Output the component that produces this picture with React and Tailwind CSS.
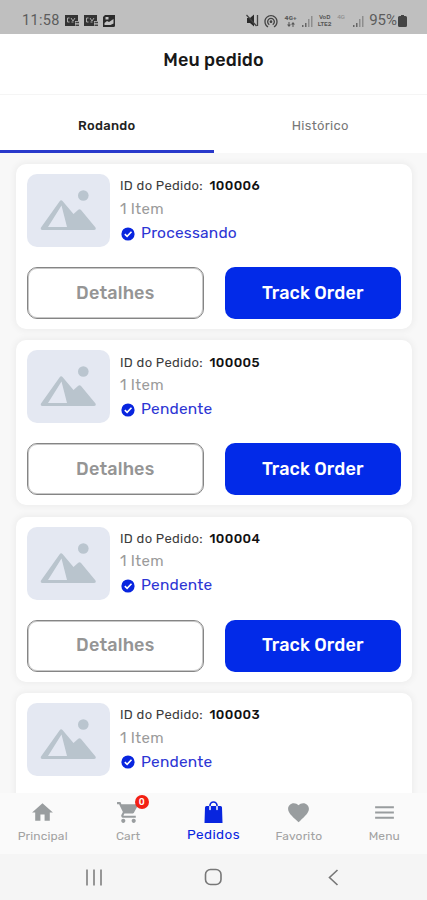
import React from 'react';
import { MdHome, MdShoppingCart, MdFavorite, MdMenu, MdWifiTethering } from 'react-icons/md';

const orders = [
  { id: '100006', status: 'Processando' },
  { id: '100005', status: 'Pendente' },
  { id: '100004', status: 'Pendente' },
  { id: '100003', status: 'Pendente' },
];

function ChatIcon() {
  return (
    <svg width="16" height="13" viewBox="0 0 16 13">
      <path d="M1 1h13v6h-3v5H1z" fill="#333" />
      <path d="M5.500 4H3.500v4h2M7 4l2 3 2-3M7.500 8h2" fill="none" stroke="#aaa" strokeWidth="1" />
      <path d="M11.500 8.500h3.500M11.500 11.300h3.500" stroke="#444" strokeWidth="1.500" />
    </svg>
  );
}

function GalleryIcon() {
  return (
    <svg width="12" height="12" viewBox="0 0 12 12">
      <path d="M2 0h10v10.500q0 1.500-1.500 1.500H0V2z" fill="#2b2b2b" />
      <path d="M2.500 2h3v2.500h-3zM1.500 8l2.500-2 2 1L10.500 4v4.500l-3 1.500h-6z" fill="#c4c4c4" />
    </svg>
  );
}

function MuteIcon() {
  return (
    <svg className="mr-[4px]" width="13" height="13" viewBox="0 0 13 13">
      <path d="M1 4h3l4-3.500v12L4 9H1z" fill="#2b2b2b" />
      <path d="M.5 1l10 11M11.500 1v11" stroke="#444" strokeWidth="1.300" />
    </svg>
  );
}

function Signal() {
  return (
    <svg width="12" height="12" viewBox="0 0 12 12">
      <path d="M1 10h1.500v2H1zM4 8h1.500v4H4z" fill="#666" />
      <path d="M7 4h1.500v8H7zM10 1h1.500v11H10z" fill="#8d8d8d" />
    </svg>
  );
}

function BagIcon({ className }) {
  return (
    <svg className={className} viewBox="0 0 25 25">
      <path d="M5.500 6h14q1.500 0 1.500 1.500L21.500 23H3.500L4 7.500Q4 6 5.500 6z" fill="currentColor" />
      <path d="M9 7V5.500a3.500 3.500 0 0 1 7 0V7" fill="none" stroke="currentColor" strokeWidth="1.700" />
      <path d="M9 6.500v3M16 6.500v3" stroke="#fff" strokeWidth="1.500" strokeLinecap="round" />
    </svg>
  );
}

function StatusBar() {
  return (
    <header className="flex h-[34px] shrink-0 items-center bg-[#bfbfbf] pt-[7px] pr-[20px] pl-[22px] text-[#5c5c5c]">
      <span className="w-[42px] font-[Roboto] text-[14.500px] tracking-[0.300px]">11:58</span>
      <span className="flex items-center gap-[3px]">
        <ChatIcon />
        <ChatIcon />
        <span className="pl-px"><GalleryIcon /></span>
      </span>
      <div className="ml-auto flex items-center">
        <MuteIcon />
        <MdWifiTethering className="mr-[5px] size-[16px] text-[#444]" />
        <span className="mr-[4px] flex w-[13px] flex-col items-center text-[6px] leading-[7px] font-bold">
          <span>4G+</span>
          <svg width="8" height="5" viewBox="0 0 8 5" fill="#555"><path d="M1.500 0h1v2.500H4L2 5 0 2.500h1.500zM5.500 5h1V2.500H8L6 0 4 2.500h1.500z" /></svg>
        </span>
        <Signal />
        <span className="ml-[3px] flex w-[17px] flex-col items-center text-[6px] leading-[7px] font-medium text-[#555]">
          <span>VoD</span>
          <span>LTE2</span>
        </span>
        <span className="mb-[6px] ml-[4px] w-[10px] text-[6px] leading-[7px] text-[#888]">4G</span>
        <span className="ml-[5px]"><Signal /></span>
        <span className="ml-[5px] font-[Roboto] text-[15px]">95%</span>
        <svg className="ml-px" width="9" height="12" viewBox="0 0 9 12">
          <path d="M3 0h3v1h1.500q1.500 0 1.500 1.500v8Q9 12 7.500 12h-6Q0 12 0 10.500v-8Q0 1 1.500 1H3z" fill="#444" />
        </svg>
      </div>
    </header>
  );
}

function Placeholder() {
  return (
    <div className="h-[73px] w-[83px] shrink-0 rounded-[10px] bg-[#e4e8f2]">
      <svg width="83" height="73" viewBox="0 0 83 73">
        <circle cx="56.300" cy="21.500" r="5.300" fill="#bac5cf" />
        <path d="M35.500 27q-1.500-1.500-3 .5L14 53.500q-1 2 1.500 2.500h51.500q2.500-.5 1.500-2.500L54 36q-1.500-1.700-3 0l-4.500 4zM34.500 31.500l5.500 21.500H21z" fillRule="evenodd" fill="#b9c4cd" />
      </svg>
    </div>
  );
}

function StatusCheck() {
  return (
    <svg className="mr-[6px] ml-px" width="14" height="14" viewBox="0 0 14 14">
      <circle cx="7" cy="7" r="6.600" fill="#0825df" />
      <path d="M3.800 7.200l2.300 2.200 4.400-4.600" fill="none" stroke="#fff" strokeWidth="1.600" />
    </svg>
  );
}

function OrderCard({ id, status }) {
  return (
    <article className="h-[165px] shrink-0 rounded-[10px] bg-white px-[11px] pt-[10px] shadow-[0_0_6px_2px_rgba(0,0,0,0.045)]">
      <div className="flex gap-[10px]">
        <Placeholder />
        <div className="flex flex-col pt-[1px]">
          <p className="flex h-[22px] items-center whitespace-nowrap text-[13px] text-[#3c3c3c]">
            <span className="w-[89.500px] tracking-[0.300px]">ID do Pedido:</span>
            <span className="font-medium tracking-[0.350px] text-[#111]">{id}</span>
          </p>
          <p className="flex h-[24px] items-center text-[15px] tracking-[0.350px] text-[#9b9b9b]">1 Item</p>
          <p className="flex h-[25px] items-center text-[15.500px] tracking-[0.200px] text-[#2d35d4]">
            <StatusCheck />
            {status}
          </p>
        </div>
      </div>
      <div className="mt-[20px] flex gap-[21px]">
        <button className="h-[52px] w-[177px] rounded-[10px] border border-[#858585] text-[18px] font-medium tracking-[0.150px] text-[#959595] shadow-[inset_0_0_0_1px_#c8c8c8]">Detalhes</button>
        <button className="h-[52px] w-[177px] rounded-[10px] bg-[#022ae8] text-[18px] font-medium tracking-[0.120px] text-white">Track Order</button>
      </div>
    </article>
  );
}

function NavItem({ icon: Icon, label, active, badge }) {
  return (
    <a className={active ? 'flex flex-1 flex-col items-center pt-[7px] text-[#0825df]' : 'flex flex-1 flex-col items-center pt-[7px] text-[#999d9f]'}>
      <span className="relative">
        <Icon className="size-[25px]" />
        {badge && <span className="absolute -top-[5px] left-[19px] flex size-[14px] items-center justify-center rounded-full bg-[#f32013] text-[9px] leading-[14px] font-medium text-white">{badge}</span>}
      </span>
      <span className={active ? 'mt-px text-[13.500px] leading-[16px] tracking-[0.400px]' : 'mt-[3px] text-[12px] leading-[16px] tracking-[0.150px] text-[#a2a2a2]'}>{label}</span>
    </a>
  );
}

export default function App() {
  return (
    <div className="flex h-[900px] w-[427px] flex-col overflow-hidden bg-[#f8f8f8] font-['Rubik','Roboto',sans-serif]">
      <StatusBar />
      <h1 className="flex h-[61px] shrink-0 items-center justify-center border-b border-[#f5f5f5] bg-white pb-[8px] text-[18px] font-medium tracking-[0.120px] text-[#181818]">Meu pedido</h1>
      <nav className="flex h-[58px] shrink-0 bg-white text-[13px]">
        <span className="flex flex-1 items-center justify-center border-b-[3px] border-[#2939cb] pt-[6px] font-medium tracking-[0.300px] text-[#222]">Rodando</span>
        <span className="flex flex-1 items-center justify-center border-b-[3px] border-white pt-[6px] tracking-[0.300px] text-[#777]">Histórico</span>
      </nav>
      <main className="flex min-h-0 flex-1 flex-col gap-[11.300px] overflow-hidden pt-[11px] pr-[15px] pl-[16px]">
        {orders.map((order) => <OrderCard key={order.id} {...order} />)}
      </main>
      <nav className="flex h-[61px] shrink-0 bg-[#fafafa]">
        <NavItem icon={MdHome} label="Principal" />
        <NavItem icon={MdShoppingCart} label="Cart" badge="0" />
        <NavItem icon={BagIcon} label="Pedidos" active />
        <NavItem icon={MdFavorite} label="Favorito" />
        <NavItem icon={MdMenu} label="Menu" />
      </nav>
      <footer className="flex h-[46px] shrink-0 items-center bg-[#f5f5f5] pl-[86px]">
        <svg width="16" height="17" viewBox="0 0 16 17" stroke="#777" strokeWidth="1.500"><path d="M1 .5v16M8 .5v16M15 .5v16" /></svg>
        <svg className="ml-[102px]" width="18" height="18" viewBox="0 0 18 18" fill="none" stroke="#777" strokeWidth="1.600"><rect x="1.500" y="1.500" width="15.500" height="15" rx="5" /></svg>
        <svg className="ml-[106px]" width="11" height="17" viewBox="0 0 11 17" fill="none" stroke="#777" strokeWidth="1.600"><path d="M9.500 1L1.500 8.500l8 7.500" /></svg>
      </footer>
    </div>
  );
}
